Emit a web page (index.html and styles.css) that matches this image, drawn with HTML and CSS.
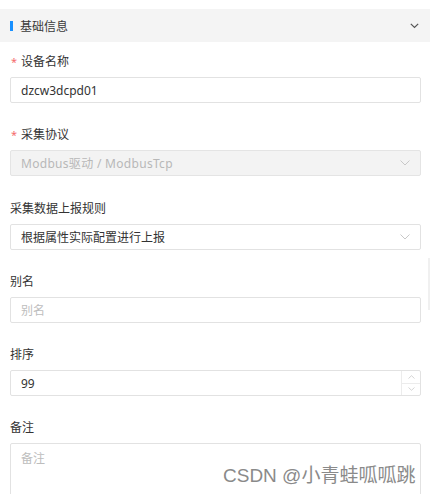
FILE: index.html
```html
<!DOCTYPE html>
<html lang="zh-CN">
<head>
<meta charset="utf-8">
<link rel="stylesheet" href="styles.css">
</head>
<body>
<div class="page">
  <div class="section-head">
    <span class="bar"></span>
    <span class="section-title">基础信息</span>
    <svg class="head-chev" width="9" height="6" viewBox="0 0 9 6"><path d="M0.8 0.8 L4.5 4.5 L8.2 0.8" fill="none" stroke="#555" stroke-width="1.2"/></svg>
  </div>
  <form class="form">
    <div class="item">
      <div class="label"><span class="req">*</span>设备名称</div>
      <div class="input"><span class="val">dzcw3dcpd01</span></div>
    </div>
    <div class="item">
      <div class="label"><span class="req">*</span>采集协议</div>
      <div class="input disabled"><span class="val dis">Modbus驱动 / ModbusTcp</span>
        <svg class="chev" width="10" height="6" viewBox="0 0 10 6"><path d="M0.5 0.5 L5 5 L9.5 0.5" fill="none" stroke="#c8c8c8" stroke-width="1"/></svg>
      </div>
    </div>
    <div class="item">
      <div class="label">采集数据上报规则</div>
      <div class="input"><span class="val">根据属性实际配置进行上报</span>
        <svg class="chev" width="10" height="6" viewBox="0 0 10 6"><path d="M0.5 0.5 L5 5 L9.5 0.5" fill="none" stroke="#c8c8c8" stroke-width="1"/></svg>
      </div>
    </div>
    <div class="item">
      <div class="label">别名</div>
      <div class="input"><span class="val ph">别名</span></div>
    </div>
    <div class="item">
      <div class="label">排序</div>
      <div class="input num"><span class="val">99</span>
        <div class="steps">
          <div class="step"><svg width="7" height="4" viewBox="0 0 7 4"><path d="M0.5 3.5 L3.5 0.7 L6.5 3.5" fill="none" stroke="#d0d0d0" stroke-width="0.9"/></svg></div>
          <div class="step"><svg width="7" height="4" viewBox="0 0 7 4"><path d="M0.5 0.5 L3.5 3.3 L6.5 0.5" fill="none" stroke="#d0d0d0" stroke-width="0.9"/></svg></div>
        </div>
      </div>
    </div>
    <div class="item">
      <div class="label">备注</div>
      <div class="textarea"><span class="ph">备注</span></div>
    </div>
  </form>
  <div class="scroll-hint"></div>
  <div class="watermark">CSDN @小青蛙呱呱跳</div>
</div>
</body>
</html>
```
FILE: styles.css
```css
html, body {
  margin: 0;
  padding: 0;
  background: #fff;
}
body {
  font-family: "Noto Sans", "Noto Sans CJK SC", sans-serif;
  font-size: 12px;
  color: #333;
}
.page {
  position: relative;
  width: 430px;
  height: 494px;
  overflow: hidden;
  padding-top: 9px;
  box-sizing: border-box;
}
.section-head {
  height: 33px;
  background: #f4f4f4;
  display: flex;
  align-items: center;
  padding-left: 10px;
  padding-right: 11px;
}
.bar {
  width: 3px;
  height: 10px;
  background: #1890ff;
  margin-right: 7px;
}
.section-title {
  font-size: 12px;
  color: #3a3a3a;
  flex: 1;
}
.form {
  padding: 10px 9px 0 10px;
  display: flex;
  flex-direction: column;
  gap: 22.3px;
}
.item {
  display: flex;
  flex-direction: column;
  gap: 5px;
}
.label {
  height: 20px;
  line-height: 20px;
  font-size: 12px;
  color: #333;
  display: flex;
  align-items: center;
}
.req {
  color: #f56c6c;
  width: 10px;
  margin-left: 1px;
  font-size: 11px;
}
.input {
  height: 26px;
  border: 1px solid #e2e2e2;
  border-radius: 2px;
  box-sizing: border-box;
  display: flex;
  align-items: center;
  padding: 0 10px 0 10px;
  background: #fff;
}
.input.disabled {
  background: #f3f3f3;
  border-color: #e4e4e4;
}
.val {
  flex: 1;
  font-size: 12px;
  color: #333;
}
.val.dis {
  color: #b8b8b8;
  letter-spacing: 0.3px;
}
.ph {
  color: #bdbdbd;
}
.chev {
  margin-right: 0;
}
.input.num {
  padding-right: 0;
}
.steps {
  width: 18px;
  height: 100%;
  border-left: 1px solid #ececec;
  display: flex;
  flex-direction: column;
}
.step {
  flex: 1;
  display: flex;
  align-items: center;
  justify-content: center;
}
.step + .step {
  border-top: 1px solid #ececec;
}
.textarea {
  height: 70px;
  border: 1px solid #e2e2e2;
  border-radius: 2px;
  padding: 5px 10px;
  box-sizing: border-box;
  font-size: 12px;
  line-height: 20px;
}
.scroll-hint {
  position: absolute;
  right: 0;
  top: 258px;
  width: 2px;
  height: 52px;
  background: #f0f0f0;
}
.watermark {
  position: absolute;
  left: 223px;
  top: 465px;
  font-family: "Liberation Sans", "Noto Sans CJK SC", sans-serif;
  font-size: 19px;
  line-height: 22px;
  color: #8a8a8a;
  text-shadow: 0 0 1px #fff, 0 0 2px #fff;
  white-space: nowrap;
}
```
